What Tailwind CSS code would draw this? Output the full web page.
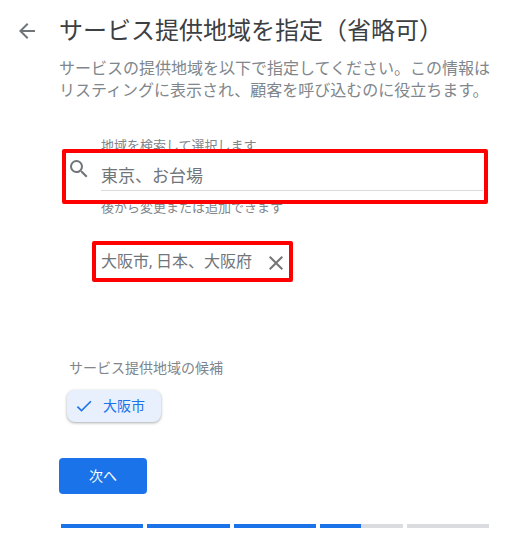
<!DOCTYPE html>
<html lang="ja">
<head>
  <meta charset="UTF-8">
  <title>サービス提供地域を指定</title>
  <script src="https://cdn.jsdelivr.net/npm/@tailwindcss/browser@4"></script>
</head>
<body class="bg-white w-[524px] h-[552px] overflow-hidden font-['Roboto','Noto_Sans_CJK_JP',sans-serif]">

  <div class="flex items-start pt-[15px]">
    <div class="w-[59px] flex justify-end pr-[20px] pt-[4px] shrink-0">
      <svg class="w-[24px] h-[24px] text-[#70757a]" viewBox="0 0 24 24" fill="currentColor"><path d="M20 11H7.83l5.59-5.59L12 4l-8 8 8 8 1.41-1.41L7.83 13H20v-2z"/></svg>
    </div>
    <h1 class="text-[24px] leading-[32px] text-[#3c4043] whitespace-nowrap">サービス提供地域を指定（省略可）</h1>
  </div>

  <p class="ml-[59px] mt-[11px] w-[440px] text-[16px] leading-[22px] text-[#80868b]">サービスの提供地域を以下で指定してください。この情報はリスティングに表示され、顧客を呼び込むのに役立ちます。</p>

  <div class="ml-[62px] mt-[36px] w-[426px]">
    <div class="pl-[39px] text-[13px] leading-[16px] h-[16px] text-[#80868b]">地域を検索して選択します</div>
    <div class="relative -mt-[5px] h-[55px] bg-white border-4 border-[#ff0000] rounded-[2px] flex items-start">
      <svg class="w-[24px] h-[24px] mt-[4px] ml-[1px] text-[#70757a] shrink-0" viewBox="0 0 24 24" fill="currentColor"><path d="M15.5 14h-.79l-.28-.27A6.471 6.471 0 0 0 16 9.5 6.5 6.5 0 1 0 9.5 16c1.61 0 3.09-.59 4.23-1.57l.27.28v.79l5 4.99L20.49 19l-4.99-5zm-6 0C7.01 14 5 11.99 5 9.5S7.01 5 9.5 5 14 7.01 14 9.5 11.99 14 9.5 14z"/></svg>
      <div class="ml-[10px] flex-1 mr-[1px] h-[38px] border-b border-[#dadce0] pt-[11px] text-[17px] leading-[24px] text-[#70757a] whitespace-nowrap">東京、お台場</div>
    </div>
    <div class="pl-[39px] -mt-[4px] text-[13px] leading-[16px] text-[#80868b]">後から変更または追加できます</div>
  </div>

  <div class="ml-[92px] mt-[25px] w-[201px] h-[41px] border-4 border-[#ff0000] rounded-[2px] flex items-center pl-[5px] pr-[1px] justify-between">
    <span class="text-[16px] text-[#70757a] whitespace-nowrap">大阪市, 日本、大阪府</span>
    <svg class="w-[24px] h-[24px] mt-[2px] text-[#757575] shrink-0" viewBox="0 0 24 24" fill="currentColor"><path d="M19 6.41 17.59 5 12 10.59 6.41 5 5 6.41 10.59 12 5 17.59 6.41 19 12 13.41 17.59 19 19 17.59 13.41 12z"/></svg>
  </div>

  <div class="ml-[69px] mt-[77px] text-[14px] leading-[18px] text-[#80868b]">サービス提供地域の候補</div>

  <div class="ml-[67px] mt-[13px] w-[94px] h-[32px] rounded-[8px] bg-[#e8f0fe] shadow-[0_1px_3px_rgba(60,64,67,0.45)] flex items-center pl-[7px]">
    <svg class="w-[20px] h-[20px] text-[#1a73e8] shrink-0" viewBox="0 0 24 24" fill="currentColor"><path d="M9 16.17 4.83 12l-1.42 1.41L9 19 21 7l-1.41-1.41z"/></svg>
    <span class="ml-[9px] text-[14px] text-[#1a73e8]">大阪市</span>
  </div>

  <button class="block ml-[59px] mt-[36px] w-[88px] h-[36px] rounded-[4px] bg-[#1a73e8] text-white text-[14px]">次へ</button>

  <div class="ml-[61px] mt-[30px] flex gap-[4px] h-[4px]">
    <div class="w-[82px] bg-[#1a73e8]"></div>
    <div class="w-[83px] bg-[#1a73e8]"></div>
    <div class="w-[82px] bg-[#1a73e8]"></div>
    <div class="w-[83px] bg-[#dadce0]"><div class="w-[41px] h-full bg-[#1a73e8]"></div></div>
    <div class="w-[82px] bg-[#dadce0]"></div>
  </div>

</body>
</html>
